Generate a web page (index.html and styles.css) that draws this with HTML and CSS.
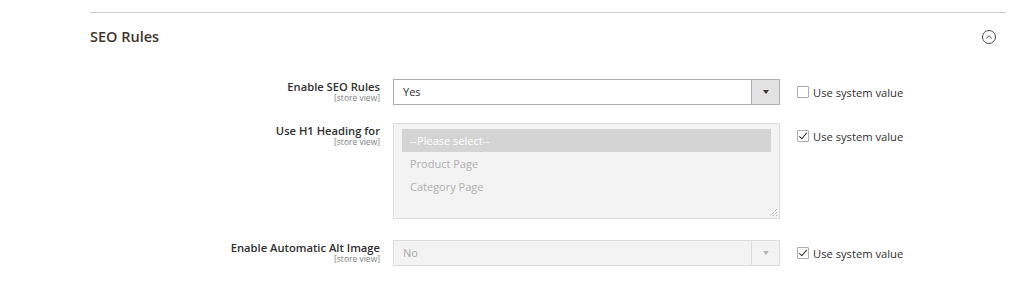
FILE: index.html
```html
<!DOCTYPE html>
<html lang="en">
<head>
    <meta charset="UTF-8">
    <title>SEO Rules</title>
    <link rel="stylesheet" href="styles.css">
</head>
<body>
    <div class="section">
        <div class="section-head">
            <h2>SEO Rules</h2>
            <svg class="toggle" width="16" height="16" viewBox="0 0 16 16">
                <circle cx="8" cy="8" r="6.5" fill="none" stroke="#514943" stroke-width="1"/>
                <path d="M5.3 9.3 L8 6.7 L10.7 9.3" fill="none" stroke="#514943" stroke-width="1"/>
            </svg>
        </div>

        <div class="rows">
            <div class="label">
                <span>Enable SEO Rules</span>
                <small>[store view]</small>
            </div>
            <div class="select">
                <span class="value">Yes</span>
                <span class="select-btn"><i></i></span>
            </div>
            <label class="check"><span class="box"></span>Use system value</label>

            <div class="label row2">
                <span>Use H1 Heading for</span>
                <small>[store view]</small>
            </div>
            <div class="multi row2">
                <div class="opt selected">--Please select--</div>
                <div class="opt">Product Page</div>
                <div class="opt">Category Page</div>
                <svg class="grip" width="9" height="9" viewBox="0 0 9 9">
                    <path d="M8 1 L1 8 M8 4 L4 8 M8 7 L7 8" stroke="#999" stroke-width="1" stroke-dasharray="1 1"/>
                </svg>
            </div>
            <label class="check row2"><span class="box checked"></span>Use system value</label>

            <div class="label row3">
                <span>Enable Automatic Alt Image</span>
                <small>[store view]</small>
            </div>
            <div class="select disabled row3">
                <span class="value">No</span>
                <span class="select-btn"><i></i></span>
            </div>
            <label class="check row3"><span class="box checked"></span>Use system value</label>
        </div>
    </div>
</body>
</html>
```

FILE: styles.css
```css
body {
    margin: 0;
    padding: 0;
    font-family: "Open Sans", "Noto Sans", sans-serif;
    background: #fff;
    color: #41362f;
}

.section {
    margin: 12px 11px 0 90px;
    border-top: 1px solid #cccccc;
}

.section-head {
    display: flex;
    align-items: center;
    justify-content: space-between;
    height: 49px;
}

.section-head h2 {
    margin: 0 0 2px;
    font-size: 14.5px;
    font-weight: 600;
    color: #41362f;
}

.toggle {
    margin: 0 9px 2px 0;
}

.rows {
    display: grid;
    grid-template-columns: 290px 387px auto;
    column-gap: 13px;
    padding-top: 17px;
}

.label {
    display: flex;
    flex-direction: column;
    align-items: flex-end;
    padding-top: 1px;
}

.label span {
    font-size: 11.2px;
    font-weight: 600;
    line-height: 14px;
    color: #303030;
}

.label small {
    font-size: 8.5px;
    line-height: 8px;
    color: #808080;
}

.select {
    display: flex;
    height: 26px;
    box-sizing: border-box;
    border: 1px solid #adadad;
    background: #fff;
}

.select .value {
    flex: 1;
    padding-left: 9px;
    font-size: 11px;
    line-height: 24px;
    color: #303030;
}

.select-btn {
    width: 27px;
    border-left: 1px solid #adadad;
    background: #e3e3e3;
    display: flex;
    align-items: center;
    justify-content: center;
}

.select-btn i {
    width: 0;
    height: 0;
    border-left: 3px solid transparent;
    border-right: 3px solid transparent;
    border-top: 4px solid #41362f;
}

.select.disabled {
    background: #f3f3f3;
    border-color: #dcdcdc;
}

.select.disabled .value {
    color: #a8a8a8;
}

.select.disabled .select-btn {
    background: #f3f3f3;
    border-left-color: #dcdcdc;
}

.select.disabled .select-btn i {
    border-top-color: #b5b5b5;
}

.check {
    display: flex;
    align-items: center;
    height: 26px;
    margin-left: 4px;
    font-size: 11.2px;
    color: #303030;
}

.box {
    width: 12px;
    height: 12px;
    box-sizing: border-box;
    border: 1px solid #adadad;
    border-radius: 1px;
    background: #fff;
    margin-right: 4px;
    position: relative;
}

.box.checked::after {
    content: "";
    position: absolute;
    left: 3px;
    top: 0px;
    width: 3px;
    height: 7px;
    border-right: 1.5px solid #303030;
    border-bottom: 1.5px solid #303030;
    transform: rotate(40deg);
}

.multi {
    height: 96px;
    box-sizing: border-box;
    border: 1px solid #dcdcdc;
    background: #f3f3f3;
    padding: 5px 8px;
    position: relative;
}

.opt {
    height: 23px;
    line-height: 23px;
    padding-left: 8px;
    font-size: 11px;
    color: #b0b0b0;
}

.opt.selected {
    background: #d4d4d4;
    color: #fff;
}

.grip {
    position: absolute;
    right: 1px;
    bottom: 1px;
}

.row2 {
    margin-top: 18px;
}

.row3 {
    margin-top: 21px;
}
```
